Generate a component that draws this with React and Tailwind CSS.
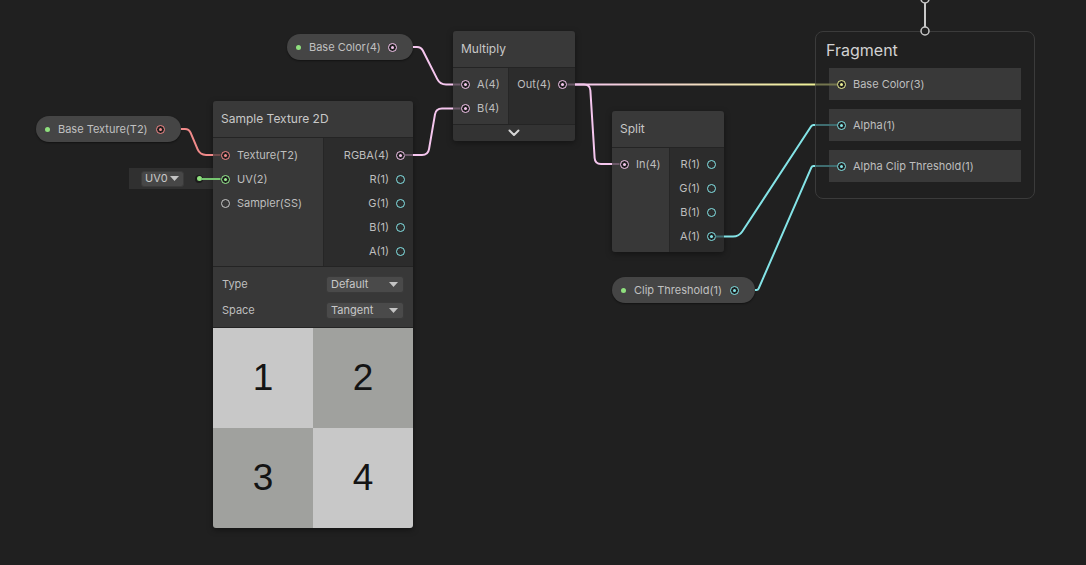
import React from "react";

const PORT = {
  tex: { ring: "border-[#f48b8b]", dot: "bg-[#f48b8b]" },
  v4: { ring: "border-[#f5c6ee]", dot: "bg-[#f5c6ee]" },
  v3: { ring: "border-[#eef196]", dot: "bg-[#eef196]" },
  v2: { ring: "border-[#9aef92]", dot: "bg-[#9aef92]" },
  v1: { ring: "border-[#84e4e7]", dot: "bg-[#84e4e7]" },
  ss: { ring: "border-[#c8c8c8]", dot: "bg-[#c8c8c8]" },
};

function Port({ t, on }) {
  return (
    <span
      className={`flex h-[9px] w-[9px] shrink-0 items-center justify-center rounded-full border-[1.5px] ${
        on ? "bg-[#1e1e1e]" : "bg-transparent"
      } ${PORT[t].ring}`}
    >
      {on && <span className={`h-[3px] w-[3px] rounded-full ${PORT[t].dot}`} />}
    </span>
  );
}

function InRow({ t, on, label }) {
  return (
    <div className="flex h-[24px] items-center gap-[7px] pl-[8px]">
      <Port t={t} on={on} />
      <span className="whitespace-nowrap">{label}</span>
    </div>
  );
}

function OutRow({ t, on, label }) {
  return (
    <div className="flex h-[24px] items-center justify-end gap-[7px] pr-[8px]">
      <span className="whitespace-nowrap">{label}</span>
      <Port t={t} on={on} />
    </div>
  );
}

function Pill({ pos, label, t }) {
  return (
    <div
      className={`absolute ${pos} flex h-[26px] items-center rounded-full bg-[#454545] pl-[9px] pr-[16px] pt-[1px] shadow-[0_1px_2px_rgba(0,0,0,0.45)]`}
    >
      <span className="h-[5px] w-[5px] shrink-0 rounded-full bg-[#8fe07e]" />
      <span className="ml-[8px] whitespace-nowrap text-[11px] text-[#c0c0c0]">{label}</span>
      <span className="ml-auto">
        <Port t={t} on />
      </span>
    </div>
  );
}

function Title({ children }) {
  return (
    <div className="flex h-[37px] items-center border-b border-[#242424] bg-[#393939] pl-[8px] text-[12px] text-[#c8c8c8]">
      {children}
    </div>
  );
}

function Caret() {
  return (
    <svg width="9" height="5" viewBox="0 0 9 5" className="shrink-0">
      <polygon points="0,0 9,0 4.5,5" fill="#c4c4c4" />
    </svg>
  );
}

function Dropdown({ value }) {
  return (
    <div className="flex h-[17px] w-[78px] items-center justify-between rounded-[3px] border border-[#3a3a3a] bg-[#4a4a4a] pl-[4px] pr-[5px] text-[11px] text-[#c8c8c8]">
      <span>{value}</span>
      <Caret />
    </div>
  );
}

function roundPath(pts, r = 5) {
  let d = `M${pts[0][0]} ${pts[0][1]}`;
  for (let i = 1; i < pts.length - 1; i++) {
    const [ax, ay] = pts[i - 1];
    const [px, py] = pts[i];
    const [bx, by] = pts[i + 1];
    const l1 = Math.hypot(px - ax, py - ay);
    const l2 = Math.hypot(bx - px, by - py);
    const rr = Math.min(r, l1 / 2, l2 / 2);
    const x1 = px - ((px - ax) / l1) * rr;
    const y1 = py - ((py - ay) / l1) * rr;
    const x2 = px + ((bx - px) / l2) * rr;
    const y2 = py + ((by - py) / l2) * rr;
    d += ` L${x1} ${y1} Q${px} ${py} ${x2} ${y2}`;
  }
  const [lx, ly] = pts[pts.length - 1];
  d += ` L${lx} ${ly}`;
  return d;
}

function Wires() {
  const wires = [
    { c: "#f08a8a", p: [[181, 129], [189, 129], [200, 155], [213, 155]] },
    { c: "#f5c6ee", p: [[413, 47], [421, 47], [440, 84.5], [453, 84.5]] },
    { c: "#f5c6ee", p: [[413, 155], [428, 155], [436, 108.5], [453, 108.5]] },
    { c: "#f5c6ee", p: [[575, 84.5], [590, 84.5], [595, 164], [612, 164]] },
    { c: "url(#g1)", p: [[575, 84.5], [815, 84.5]] },
    { c: "#84e4e7", p: [[724, 236.5], [739, 236.5], [812, 125], [815, 125]] },
    { c: "#84e4e7", p: [[755, 290], [758, 290], [812, 166], [815, 166]] },
  ];
  const stubs = [
    { c: "#6e4b4b", x1: 213, x2: 220.5, y: 155 },
    { c: "#6b5868", x1: 404.5, x2: 413, y: 155 },
    { c: "#6b5868", x1: 453, x2: 460.5, y: 84.5 },
    { c: "#6b5868", x1: 453, x2: 460.5, y: 108.5 },
    { c: "#6b5868", x1: 567.5, x2: 575, y: 84.5 },
    { c: "#6b5868", x1: 612, x2: 619.5, y: 164 },
    { c: "#3f6d70", x1: 715.5, x2: 724, y: 236.5 },
    { c: "#74764f", x1: 815, x2: 837, y: 84.5 },
    { c: "#3f6d70", x1: 815, x2: 837, y: 125 },
    { c: "#3f6d70", x1: 815, x2: 837, y: 166 },
  ];
  return (
    <svg
      className="pointer-events-none absolute left-0 top-0"
      width="1086"
      height="565"
      viewBox="0 0 1086 565"
    >
      <defs>
        <linearGradient id="g1" gradientUnits="userSpaceOnUse" x1="575" y1="0" x2="815" y2="0">
          <stop offset="0" stopColor="#f5c6ee" />
          <stop offset="1" stopColor="#eef196" />
        </linearGradient>
      </defs>
      {wires.map((w, i) => (
        <path key={i} d={roundPath(w.p, 6)} stroke={w.c} strokeWidth="2" fill="none" />
      ))}
      {stubs.map((s, i) => (
        <line key={i} x1={s.x1} x2={s.x2} y1={s.y} y2={s.y} stroke={s.c} strokeWidth="2" />
      ))}
      <line x1="201" x2="220.5" y1="179" y2="179" stroke="#76c570" strokeWidth="2" />
      <line x1="925" x2="925" y1="3" y2="27" stroke="#c8c8c8" strokeWidth="2" />
      <circle cx="925" cy="31" r="4" fill="#202020" stroke="#c8c8c8" strokeWidth="1.5" />
      <circle cx="925" cy="-1" r="4" fill="#202020" stroke="#c8c8c8" strokeWidth="1.5" />
    </svg>
  );
}

function Cell({ n, light }) {
  return (
    <div
      className={`flex h-[100px] items-center justify-center font-[Liberation_Sans,Arial,sans-serif] text-[37px] text-[#141414] ${
        light ? "bg-[#c8c8c8]" : "bg-[#a0a19e]"
      }`}
    >
      {n}
    </div>
  );
}

export default function App() {
  return (
    <div className="relative h-[565px] w-[1086px] overflow-hidden bg-[#202020] font-[Inter,sans-serif] text-[11px] text-[#bebebe]">
      <Pill pos="left-[36px] top-[116px] w-[145px]" label="Base Texture(T2)" t="tex" />
      <Pill pos="left-[287px] top-[34px] w-[126px]" label="Base Color(4)" t="v4" />
      <Pill pos="left-[612px] top-[277px] w-[143px]" label="Clip Threshold(1)" t="v1" />

      <div className="absolute left-[129px] top-[168px] flex h-[21px] w-[84px] items-center bg-[#303030] pl-[12px]">
        <div className="flex h-[16px] w-[43px] items-center justify-between rounded-[3px] border border-[#3a3a3a] bg-[#474747] pl-[3px] pr-[4px] text-[11px] text-[#c8c8c8]">
          <span>UV0</span>
          <Caret />
        </div>
        <span className="ml-[11px] flex h-[8px] w-[8px] items-center justify-center rounded-full bg-[#1b1b1b]">
          <span className="h-[5px] w-[5px] rounded-full bg-[#8fe07e]" />
        </span>
      </div>

      <div className="absolute left-[213px] top-[101px] flex w-[200px] flex-col overflow-hidden rounded-[3px] shadow-[0_2px_6px_rgba(0,0,0,0.4)]">
        <Title>Sample Texture 2D</Title>
        <div className="flex h-[128px]">
          <div className="flex w-[110px] flex-col bg-[#383838] pt-[5px]">
            <InRow t="tex" on label="Texture(T2)" />
            <InRow t="v2" on label="UV(2)" />
            <InRow t="ss" label="Sampler(SS)" />
          </div>
          <div className="flex flex-1 flex-col border-l border-[#262626] bg-[#2c2c2c] pt-[5px]">
            <OutRow t="v4" on label="RGBA(4)" />
            <OutRow t="v1" label="R(1)" />
            <OutRow t="v1" label="G(1)" />
            <OutRow t="v1" label="B(1)" />
            <OutRow t="v1" label="A(1)" />
          </div>
        </div>
        <div className="flex flex-col border-t border-[#242424] bg-[#383838] py-[4px] pl-[9px] pr-[9px]">
          <div className="flex h-[26px] items-center justify-between">
            <span>Type</span>
            <Dropdown value="Default" />
          </div>
          <div className="flex h-[26px] items-center justify-between">
            <span>Space</span>
            <Dropdown value="Tangent" />
          </div>
        </div>
        <div className="grid grid-cols-2 border-t border-[#242424]">
          <Cell n="1" light />
          <Cell n="2" />
          <Cell n="3" />
          <Cell n="4" light />
        </div>
      </div>

      <div className="absolute left-[453px] top-[31px] flex w-[122px] flex-col overflow-hidden rounded-[3px] shadow-[0_2px_6px_rgba(0,0,0,0.4)]">
        <Title>Multiply</Title>
        <div className="flex h-[56px]">
          <div className="flex w-[55px] flex-col bg-[#383838] pt-[4px]">
            <InRow t="v4" on label="A(4)" />
            <InRow t="v4" on label="B(4)" />
          </div>
          <div className="flex flex-1 flex-col border-l border-[#262626] bg-[#2c2c2c] pt-[4px]">
            <OutRow t="v4" on label="Out(4)" />
          </div>
        </div>
        <div className="flex h-[17px] items-center justify-center border-t border-[#242424] bg-[#333333]">
          <svg width="12" height="8" viewBox="0 0 12 8">
            <path d="M1.5 1.5 L6 6 L10.5 1.5" stroke="#d6d6d6" strokeWidth="2" fill="none" strokeLinecap="round" strokeLinejoin="round" />
          </svg>
        </div>
      </div>

      <div className="absolute left-[612px] top-[111px] flex w-[112px] flex-col overflow-hidden rounded-[3px] shadow-[0_2px_6px_rgba(0,0,0,0.4)]">
        <Title>Split</Title>
        <div className="flex h-[104px]">
          <div className="flex w-[57px] flex-col bg-[#383838] pt-[4px]">
            <InRow t="v4" on label="In(4)" />
          </div>
          <div className="flex flex-1 flex-col border-l border-[#262626] bg-[#2c2c2c] pt-[4px]">
            <OutRow t="v1" label="R(1)" />
            <OutRow t="v1" label="G(1)" />
            <OutRow t="v1" label="B(1)" />
            <OutRow t="v1" on label="A(1)" />
          </div>
        </div>
      </div>

      <div className="absolute left-[815px] top-[31px] flex h-[168px] w-[220px] flex-col rounded-[8px] border border-[#3b3b3b] bg-[#202020]">
        <div className="flex h-[36px] items-center pl-[10px] text-[16px] text-[#d2d2d2]">Fragment</div>
        <div className="flex flex-col gap-[9px] px-[13px]">
          {[
            ["v3", "Base Color(3)"],
            ["v1", "Alpha(1)"],
            ["v1", "Alpha Clip Threshold(1)"],
          ].map(([t, l]) => (
            <div key={l} className="flex h-[32px] items-center gap-[7px] bg-[#393939] pl-[8px]">
              <Port t={t} on />
              <span className="whitespace-nowrap">{l}</span>
            </div>
          ))}
        </div>
      </div>

      <Wires />
    </div>
  );
}
